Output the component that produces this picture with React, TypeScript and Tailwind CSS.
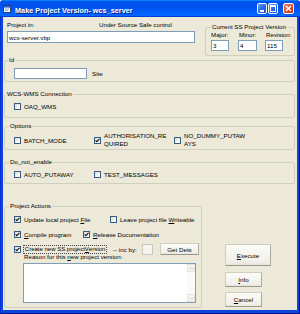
import React from "react";

const T = "text-[6.2px] leading-[7px]";

function Box({ checked }: { checked?: boolean }) {
  return (
    <span className="w-[7px] h-[7px] shrink-0 border border-[#3A5A80] bg-[linear-gradient(135deg,#dcdcd5,#f7f7f4_70%,#ffffff)] flex items-center justify-center">
      {checked ? (
        <svg width="5" height="5" viewBox="0 0 5 5">
          <path d="M0.6 2.3 L1.9 3.7 L4.5 0.9" stroke="#1a1a1a" strokeWidth="1.2" fill="none" />
        </svg>
      ) : null}
    </span>
  );
}

function Group({
  label,
  lm,
  className = "",
  children,
}: {
  label: string;
  lm: string;
  className?: string;
  children?: React.ReactNode;
}) {
  return (
    <fieldset className={`border border-[#D0D0BF] rounded-[2px] min-w-0 ${className}`}>
      <legend className={`text-[6.2px] leading-[8px] px-[1px] ${lm}`}>{label}</legend>
      {children}
    </fieldset>
  );
}

function Btn({ className = "", children }: { className?: string; children: React.ReactNode }) {
  return (
    <div
      className={`border border-[#CFCCBD] border-b-[#9A988B] border-r-[#AEAB9D] rounded-[1px] bg-[linear-gradient(180deg,#fbfbf8,#f0efe9_85%,#e5e3d9)] flex items-center justify-center ${T} ${className}`}
    >
      {children}
    </div>
  );
}

function Inp({ className = "", children }: { className?: string; children?: React.ReactNode }) {
  return (
    <div className={`border border-[#7F9DB9] bg-white flex items-center pl-[1px] ${T} ${className}`}>
      {children}
    </div>
  );
}

function TitleBar() {
  return (
    <div className="h-[17px] flex items-start pl-[3px] pr-[6px] bg-[linear-gradient(180deg,#0997ff,#0053ee_8%,#0050ee_40%,#0066ff_88%,#0066ff_93%,#005bff_95%,#003dd7_96%,#003dd7)]">
      <svg className="mt-[5px] shrink-0" width="8" height="8" viewBox="0 0 8 8">
        <rect x="0.5" y="0.5" width="7" height="7" fill="#f4f8ff" stroke="#24407a" />
        <rect x="1" y="1" width="6" height="1.6" fill="#2a62d8" />
        <rect x="2" y="3.6" width="4" height="0.8" fill="#7c93c0" />
        <rect x="2" y="5.2" width="3" height="0.8" fill="#7c93c0" />
      </svg>
      <span className="ml-[4px] mt-[6px] text-white font-bold text-[7.3px] leading-[9px] whitespace-nowrap [text-shadow:1px_1px_#0a1883]">
        Make Project Version- wcs_server
      </span>
      <div className="ml-auto mt-[3px] flex items-start">
        <div className="w-[10px] h-[11px] rounded-[2px] border border-white bg-[linear-gradient(135deg,#5f9cff,#2563e8_60%,#1a4fd6)] relative">
          <span className="absolute left-[2px] top-[6px] w-[4px] h-[2px] bg-white" />
        </div>
        <div className="ml-[1px] w-[10px] h-[11px] rounded-[2px] border border-white bg-[linear-gradient(135deg,#5f9cff,#2563e8_60%,#1a4fd6)] relative">
          <span className="absolute left-[1px] top-[1px] w-[6px] h-[7px] border border-white border-t-2" />
        </div>
        <div className="ml-[5px] w-[11px] h-[11px] rounded-[2px] border border-white bg-[linear-gradient(135deg,#f08a6c,#e0421c_60%,#c93312)] flex items-center justify-center">
          <svg width="7" height="7" viewBox="0 0 7 7">
            <path d="M1 1 L6 6 M6 1 L1 6" stroke="white" strokeWidth="1.5" />
          </svg>
        </div>
      </div>
    </div>
  );
}

export default function App() {
  return (
    <div className="w-[300px] h-[314px] bg-white font-['Liberation_Sans',Arial,sans-serif] text-black">
      <div className="w-full h-full flex flex-col rounded-t-[4px] overflow-hidden bg-[#0A46DA] shadow-[inset_-1px_-1px_#00138c,inset_1px_0_#0831d9]">
        <TitleBar />
        <div className="mx-[3px] h-[293px] bg-[#ECE9D8] pl-[1px] pr-[2px] flex flex-col">
          {/* Section 1 */}
          <div className="flex h-[39px] shrink-0">
            <div className="ml-[3px] w-[188px] flex flex-col">
              <div className={`mt-[4px] flex ${T}`}>
                <span className="w-[92px]">Project in:</span>
                <span>Under Source Safe control</span>
              </div>
              <Inp className="mt-[3px] h-[12px] w-[188px]">wcs-server.vbp</Inp>
            </div>
            <Group label="Current SS Project Version" lm="ml-[5px]" className="ml-[10px] mt-[6px] w-[90px] h-[33px]">
              <div className="pl-[5px] pb-[4px] grid grid-cols-[27px_27px_1fr]">
                <span className={T}>Major:</span>
                <span className={`${T} pl-[1px]`}>Minor:</span>
                <span className={`${T} pl-[1px]`}>Revision:</span>
                <Inp className="mt-[2px] w-[18px] h-[11px]">3</Inp>
                <Inp className="mt-[2px] w-[19px] h-[11px]">4</Inp>
                <Inp className="mt-[2px] w-[18px] h-[11px]">115</Inp>
              </div>
            </Group>
          </div>

          {/* Id */}
          <Group label="Id" lm="ml-[3px]" className="shrink-0">
            <div className="pl-[9px] pt-[4px] pb-[2px] flex items-center">
              <Inp className="w-[73px] h-[11px]" />
              <span className={`ml-[5px] ${T}`}>Site</span>
            </div>
          </Group>

          {/* WCS-WMS */}
          <Group label="WCS-WMS Connection" lm="ml-[1px]" className="mt-[8px] shrink-0">
            <div className="pl-[9px] pt-[5px] pb-[7px] flex items-center h-[19px]">
              <Box />
              <span className={`ml-[3px] ${T}`}>OAQ_WMS</span>
            </div>
          </Group>

          {/* Options */}
          <Group label="Options" lm="ml-[4px]" className="mt-[4px] shrink-0">
            <div className="pl-[9px] pt-[2px] pb-[1px] flex">
              <div className="w-[80px] h-[16px] flex items-center">
                <Box />
                <span className={`ml-[3px] ${T}`}>BATCH_MODE</span>
              </div>
              <div className="w-[80px] h-[16px] flex items-center">
                <Box checked />
                <span className="ml-[3px] text-[6.2px] leading-[8px]">
                  AUTHORISATION_RE
                  <br />
                  QUIRED
                </span>
              </div>
              <div className="h-[16px] flex items-center">
                <Box />
                <span className="ml-[3px] text-[6.2px] leading-[8px]">
                  NO_DUMMY_PUTAW
                  <br />
                  AYS
                </span>
              </div>
            </div>
          </Group>

          {/* Do_not_enable */}
          <Group label="Do_not_enable" lm="ml-[4px]" className="mt-[8px] shrink-0">
            <div className="pl-[9px] pt-[4px] pb-[5px] flex">
              <div className="w-[80px] h-[8px] flex items-center">
                <Box />
                <span className={`ml-[3px] ${T}`}>AUTO_PUTAWAY</span>
              </div>
              <div className="h-[8px] flex items-center">
                <Box />
                <span className={`ml-[3px] ${T}`}>TEST_MESSAGES</span>
              </div>
            </div>
          </Group>

          {/* Project actions + buttons */}
          <div className="flex shrink-0">
            <Group label="Project Actions" lm="ml-[4px]" className="mt-[18px] w-[198px]">
              <div className="pl-[9px] pt-[5px] pb-[4px] flex flex-col">
                <div className="h-[8px] flex items-center">
                  <div className="w-[96px] flex items-center">
                    <Box checked />
                    <span className={`ml-[3px] ${T}`}>
                      Update local project <span className="underline">F</span>ile
                    </span>
                  </div>
                  <Box />
                  <span className={`ml-[3px] ${T} whitespace-nowrap`}>
                    Leave project file <span className="underline">W</span>riteable
                  </span>
                </div>
                <div className="mt-[7px] h-[8px] flex items-center">
                  <div className="w-[69px] flex items-center">
                    <Box checked />
                    <span className={`ml-[3px] ${T}`}>
                      <span className="underline">C</span>ompile program
                    </span>
                  </div>
                  <Box checked />
                  <span className={`ml-[3px] ${T}`}>
                    <span className="underline">R</span>elease Documentation
                  </span>
                </div>
                <div className="mt-[7px] h-[8px] flex items-center">
                  <Box checked />
                  <span className="ml-[2px] w-[84px] h-[9px] border border-dotted border-[#444] flex items-center justify-center whitespace-nowrap overflow-hidden text-[6px] leading-[7px]">
                    Create new SS project <span className="underline">V</span>ersion
                  </span>
                  <span className={`ml-[6px] w-[29px] whitespace-nowrap ${T}`}>-- inc by:</span>
                  <div className="w-[11px] h-[11px] border border-[#C9C7BA] bg-[#F4F3EE]" />
                  <Btn className="ml-[7px] w-[39px] h-[12px]">Get Dets</Btn>
                </div>
                <span className={`ml-[10px] ${T}`}>
                  Reason for this <span className="underline">n</span>ew project version:
                </span>
                <div className="ml-[9px] mt-[3px] w-[173px] h-[40px] border border-[#7F9DB9] bg-white flex justify-end">
                  <div className="w-[8px] h-full bg-[#FAFAF7] flex flex-col justify-between">
                    <div className="h-[8px] border border-[#E4E3DC] bg-[#F6F6F2] flex items-center justify-center">
                      <svg width="5" height="3" viewBox="0 0 5 3">
                        <path d="M0.5 2.5 L2.5 0.6 L4.5 2.5" stroke="#C7C6BE" strokeWidth="1" fill="none" />
                      </svg>
                    </div>
                    <div className="h-[8px] border border-[#E4E3DC] bg-[#F6F6F2] flex items-center justify-center">
                      <svg width="5" height="3" viewBox="0 0 5 3">
                        <path d="M0.5 0.5 L2.5 2.4 L4.5 0.5" stroke="#C7C6BE" strokeWidth="1" fill="none" />
                      </svg>
                    </div>
                  </div>
                </div>
              </div>
            </Group>
            <div className="ml-[23px] mt-[60px] flex flex-col">
              <Btn className="w-[46px] h-[22px]">
                <span>
                  <span className="underline">E</span>xecute
                </span>
              </Btn>
              <Btn className="mt-[6px] w-[37px] h-[15px]">
                <span>
                  <span className="underline">I</span>nfo
                </span>
              </Btn>
              <Btn className="mt-[5px] w-[37px] h-[15px]">
                <span>
                  <span className="underline">C</span>ancel
                </span>
              </Btn>
            </div>
          </div>
        </div>
      </div>
    </div>
  );
}
